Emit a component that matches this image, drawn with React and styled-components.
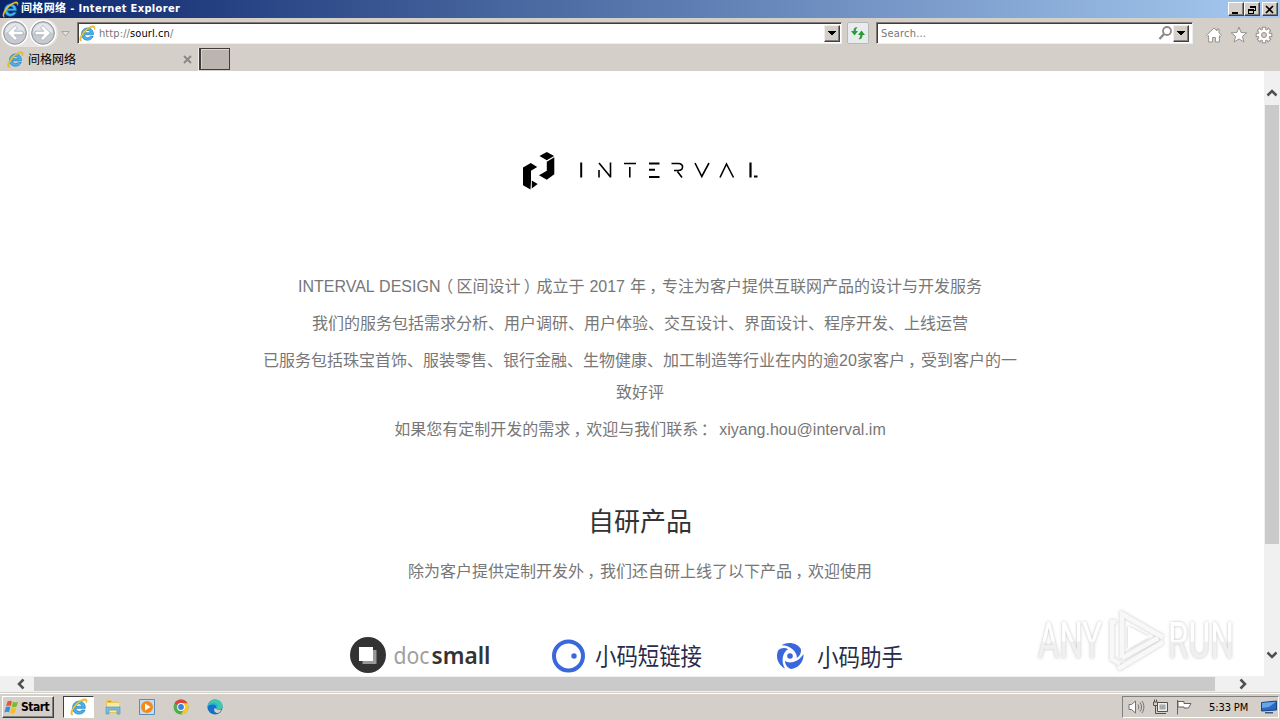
import React from "react";
import styled, { createGlobalStyle } from "styled-components";

const GlobalStyle = createGlobalStyle`
  * {
    box-sizing: border-box;
  }
  body {
    margin: 0;
    overflow: hidden;
    background: #fff;
  }
`;

const IeIcon = ({ size = 16 }) => (
  <svg width={size} height={size} viewBox="0 0 16 16">
    <path
      d="M13.6 9.2H5.2c.2 1.8 1.4 2.7 3 2.7 1.1 0 1.9-.4 2.4-1.2h2.8c-.9 2.3-2.8 3.6-5.3 3.6-3.4 0-5.8-2.3-5.8-5.7C2.3 5.2 4.7 2.8 8.1 2.8c3.5 0 5.7 2.5 5.5 6.4zM5.3 7.3h5.3C10.4 5.9 9.4 5.1 8 5.1S5.6 5.9 5.3 7.3z"
      fill="#45b4ec"
      stroke="#1a78bd"
      strokeWidth=".6"
    />
    <path
      d="M2.6 15.2C-.6 15.6.4 10.6 4.2 6.2 8 1.8 13.2-.4 14.7 1.1c.8.8.5 2.2-.2 3.6.1-1.4-.2-2.4-1.3-2.5-2-.2-5.3 1.9-8 5.1-2.9 3.5-4.2 7-2.6 7.9z"
      fill="#f4c832"
      stroke="#c48f18"
      strokeWidth=".3"
    />
  </svg>
);

const ArrowCircle = ({ flip }) => (
  <svg width="28" height="28" viewBox="0 0 28 28">
    <circle cx="14" cy="14" r="12.5" fill="#e9e9ea" stroke="#fff" strokeWidth="1.5" />
    <circle cx="14" cy="14" r="11.3" fill="#c7cbd1" stroke="#8f949b" />
    <path d="M4 14a10 10 0 0 1 20 0c-6-2-14-2-20 0z" fill="#e3e6ea" />
    <path
      d="M14 6.5 6.500 14l7.500 7.500 2.500-2.300-3.300-3.400H22v-3.600h-8.800l3.300-3.400z"
      fill="#fff"
      stroke="#a5abb4"
      strokeWidth=".8"
      transform={flip ? "translate(28 0) scale(-1 1)" : undefined}
    />
  </svg>
);

const Caret = () => (
  <svg width="8" height="5" viewBox="0 0 8 5" shapeRendering="crispEdges">
    <path d="M0 0h8L4 4.500z" fill="#000" />
  </svg>
);

const Chevron = ({ rotate = 0 }) => (
  <svg width="12" height="12" viewBox="0 0 12 12">
    <path
      d="M1.500 8.500 6 4l4.500 4.500"
      fill="none"
      stroke="#505050"
      strokeWidth="2.5"
      transform={`rotate(${rotate} 6 6)`}
    />
  </svg>
);

const HomeIcon = () => (
  <svg width="18" height="18" viewBox="0 0 18 18">
    <path
      d="M9 2 1.500 9.300l1.200 1.200.9-.8V16h4v-4.500h2.800V16h4V9.700l.9.800 1.200-1.200L14 6.900V3h-2v2z"
      fill="#fff"
      stroke="#96918c"
    />
  </svg>
);

const StarIcon = () => (
  <svg width="18" height="18" viewBox="0 0 18 18">
    <path
      d="M9 1.200l2.100 5.300 5.700.3-4.400 3.600 1.500 5.600L9 12.900 4.100 16l1.500-5.600L1.200 6.800l5.700-.3z"
      fill="#fff"
      stroke="#96918c"
    />
  </svg>
);

const GearIcon = () => (
  <svg width="18" height="18" viewBox="0 0 18 18">
    {[0, 45, 90, 135].map((a) => (
      <rect
        key={a}
        x="7.3"
        y="1.2"
        width="3.4"
        height="15.6"
        fill="#fff"
        stroke="#96918c"
        transform={`rotate(${a} 9 9)`}
      />
    ))}
    <circle cx="9" cy="9" r="5.4" fill="#fff" />
    <circle cx="9" cy="9" r="2.5" fill="#d5cfc9" stroke="#96918c" />
  </svg>
);

const IntervalLogo = () => (
  <svg width="236" height="40" viewBox="0 0 236 40">
    <g fill="#000">
      <path d="M1 16.500 8.800 12l6.400 4-6.200 3.700v10.600L8.500 38.500 1 34.200z" />
      <path d="M9.800 29.500 15.700 33l-5.900 4.500z" />
      <path d="M17.500 5 24.800 1l7.300 4-7.300 4.300z" />
      <path d="M24.800 10.800 32.300 6.300v17L24.800 28.700 17 24.200l7.800-4.500z" />
    </g>
    <g fill="none" stroke="#000" strokeWidth="1.6">
      <path d="M59.200 11.500v15" strokeWidth="2" />
      <path d="M77 19v7.500M77 12l11.500 14M88.500 11.500v15" />
      <path d="M102 12.500h12M107.800 16v10.500" />
      <path d="M127 12.500h10.500M127 18.800h6M127 26h10.500" strokeWidth="2" />
      <path d="M149.500 12.500h7c5.500 0 5.500 7-.5 7h-4M155.500 20.500l4.500 6" />
      <path d="m173 12 6.800 13.500L187 12M198 26.500 204.500 13l7 13.500" />
      <path d="M228.500 11.500v15M232 25.500h3.500" strokeWidth="2.200" />
    </g>
  </svg>
);

const DocSmallLogo = () => (
  <svg width="144" height="38" viewBox="0 0 144 38">
    <circle cx="19" cy="19" r="18" fill="#333" />
    <path d="M23 14h4.500v14h-14v-4z" fill="#999" />
    <path d="M10 11h14v14H10z" fill="#fff" />
    <g fontFamily="'Noto Sans', sans-serif" fontSize="23">
      <text x="44.5" y="27.5" fill="#a0a0a0" textLength="36" lengthAdjust="spacingAndGlyphs">
        doc
      </text>
      <text x="82.5" y="27.5" fill="#333" fontWeight="600" textLength="59" lengthAdjust="spacingAndGlyphs">
        small
      </text>
    </g>
  </svg>
);

const ShortLinkLogo = () => (
  <svg width="154" height="38" viewBox="0 0 154 38">
    <circle cx="17.5" cy="20" r="14.5" fill="none" stroke="#3a67dc" strokeWidth="4" />
    <circle cx="23" cy="20" r="2.7" fill="#3a67dc" />
    <text x="44" y="29" fontFamily="'Noto Sans CJK SC', sans-serif" fontSize="24" fill="#282c4c" textLength="107" lengthAdjust="spacingAndGlyphs">
      小码短链接
    </text>
  </svg>
);

const HelperLogo = () => (
  <svg width="130" height="38" viewBox="0 0 130 38">
    <g fill="#3a67dc" transform="translate(15 20)">
      {[0, 120, 240].map((a) => (
        <path
          key={a}
          d="M13.500-2C14 6 8 12.500 1 13-2.500 12-5 8.500-5 5-1 8 8.500 6.500 13.500-2z"
          transform={`rotate(${a})`}
        />
      ))}
      <circle r="2.8" />
    </g>
    <text x="42" y="29.5" fontFamily="'Noto Sans CJK SC', sans-serif" fontSize="24" fill="#282c4c" textLength="86" lengthAdjust="spacingAndGlyphs">
      小码助手
    </text>
  </svg>
);

const AnyRun = () => (
  <svg width="210" height="72" viewBox="0 0 210 72">
    <defs>
      <linearGradient id="fade" x1="0" y1="0" x2="0" y2="1">
        <stop offset=".5" stopColor="#fff" />
        <stop offset=".52" stopColor="#f0f0f0" />
      </linearGradient>
      <filter id="glow" x="-10%" y="-10%" width="120%" height="120%">
        <feDropShadow dx="0" dy="0" stdDeviation="1.8" floodColor="#888" floodOpacity=".55" />
      </filter>
    </defs>
    <g filter="url(#glow)" fill="url(#fade)" fontFamily="Roboto, sans-serif" fontSize="50">
      <text x="8" y="54" textLength="64" lengthAdjust="spacingAndGlyphs">
        ANY
      </text>
      <text x="138" y="54" textLength="66" lengthAdjust="spacingAndGlyphs">
        RUN
      </text>
      <g fill="none" stroke="#f8f8f8" strokeWidth="4.5">
        <path d="M86 18h-4v37l8 5" />
        <path d="M92 54V10l41 23.500" />
        <path d="M92 54l36-20M88 65l45-27" />
      </g>
      <path d="M98 22v23l21-12z" fill="#fff" />
    </g>
  </svg>
);

function TitleBar() {
  return (
    <Title>
      <IeIcon size={17} />
      <TitleText>间格网络 - Internet Explorer</TitleText>
      <WinButtons>
        <WinButton>
          <svg width="10" height="9"><path d="M1 7h6v2H1z" /></svg>
        </WinButton>
        <WinButton>
          <svg width="10" height="9" fill="none" stroke="#000" shapeRendering="crispEdges">
            <path d="M3 1h6M3.500 1v2M3 2h6M8.500 1v5M7 5.500h2M1 4h6M1 5h6M1.500 4v5M6.500 4v5M1 8.500h6" />
          </svg>
        </WinButton>
        <WinButton $gap>
          <svg width="10" height="9" stroke="#000" strokeWidth="1.7">
            <path d="m1 1 7 7M8 1 1 8" />
          </svg>
        </WinButton>
      </WinButtons>
    </Title>
  );
}

function Toolbar() {
  return (
    <Tools>
      <NavButtons>
        <ArrowCircle />
        <ArrowCircle flip />
      </NavButtons>
      <History>
        <svg width="9" height="6"><path d="M.7.500h7.600L4.500 5z" fill="#e4e1de" stroke="#aaa5a0" /></svg>
      </History>
      <Field $width={765} $end={1}>
        <IeIcon size={17} />
        <Url>
          http://<b>sourl.cn</b>/
        </Url>
        <DropButton>
          <Caret />
        </DropButton>
      </Field>
      <Refresh>
        <svg width="16" height="16" viewBox="0 0 16 16" fill="#2e9a37">
          <path d="M7.500 2.500C5.500 1.500 3.500 3 3.500 6H1l3.500 4.500L8 6H5.700c0-1.500.6-2.500 1.800-3.500z" />
          <path d="M8.500 14c2 .8 4-.5 4-4H15l-3.500-4.500L8 10h2.300c0 1.500-.6 3-1.800 4z" />
        </svg>
      </Refresh>
      <Field $width={317} $end={3}>
        <Placeholder>Search...</Placeholder>
        <svg width="16" height="16" viewBox="0 0 16 16" fill="none" stroke="#8a8a8a">
          <circle cx="10" cy="6" r="4" strokeWidth="1.8" />
          <path d="m7 9-4.500 5" strokeWidth="2.3" />
        </svg>
        <DropButton>
          <Caret />
        </DropButton>
      </Field>
      <Commands>
        <HomeIcon />
        <StarIcon />
        <GearIcon />
      </Commands>
    </Tools>
  );
}

function Tabs() {
  return (
    <TabRow>
      <Tab>
        <IeIcon size={17} />
        <span>间格网络</span>
        <svg width="9" height="9" stroke="#8a8580" strokeWidth="1.8">
          <path d="m1 1 7 7M8 1 1 8" />
        </svg>
      </Tab>
      <NewTab />
    </TabRow>
  );
}

function Page() {
  return (
    <Content>
      <IntervalLogo />
      <About>
        <p>
          INTERVAL DESIGN<Mark $shift={-0.2}>（</Mark>区间设计<Mark $shift={0.2}>）</Mark>成立于 2017 年
          <Mark $shift={0.2}>，</Mark>专注为客户提供互联网产品的设计与开发服务
        </p>
        <p>我们的服务包括需求分析、用户调研、用户体验、交互设计、界面设计、程序开发、上线运营</p>
        <p>
          已服务包括珠宝首饰、服装零售、银行金融、生物健康、加工制造等行业在内的逾20家客户
          <Mark $shift={0.2}>，</Mark>受到客户的一
          <br />
          致好评
        </p>
        <p>
          如果您有定制开发的需求<Mark $shift={0.2}>，</Mark>欢迎与我们联系<Mark $shift={0.15}>：</Mark>{" "}
          xiyang.hou@interval.im
        </p>
      </About>
      <Heading>自研产品</Heading>
      <Intro>
        除为客户提供定制开发外<Mark $shift={0.2}>，</Mark>我们还自研上线了以下产品
        <Mark $shift={0.2}>，</Mark>欢迎使用
      </Intro>
      <Products>
        <DocSmallLogo />
        <ShortLinkLogo />
        <HelperLogo />
      </Products>
    </Content>
  );
}

function Taskbar() {
  return (
    <Task>
      <Start>
        <svg width="17" height="16" viewBox="0 0 17 16">
          <path d="M3.500 2.500C5 1.500 6.500 1.500 8 2.300L6.700 7.200c-1.500-.8-3-.8-4.600.1z" fill="#e8562a" />
          <path d="M9 2.800c1.700.8 3.300.8 5-.1l-1.400 4.900c-1.600.9-3.200.9-4.900.1z" fill="#7db928" />
          <path d="M1.800 8.300c1.600-.9 3.100-.9 4.600-.1L5 13.300c-1.500-.8-3-.8-4.600.1z" fill="#3a8ee0" />
          <path d="M7.400 8.800c1.700.8 3.300.8 4.900 0l-1.400 5c-1.600.8-3.200.8-4.900 0z" fill="#f5be25" />
        </svg>
        Start
      </Start>
      <ActiveTask>
        <IeIcon size={18} />
      </ActiveTask>
      <Pinned>
        <svg width="18" height="18" viewBox="0 0 18 18">
          <path d="M2 2h5l1 1.500h7V15H2z" fill="#e9c55b" />
          <path d="M3 5h12v9H3z" fill="#fae9a3" />
          <path d="M4 3h3v1H4z" fill="#5bbd62" />
          <path d="M2 9h14v7h-3v-4H5v4H2z" fill="#76bddf" stroke="#4a91bc" strokeWidth=".6" />
        </svg>
        <svg width="18" height="18" viewBox="0 0 18 18">
          <path d="M1.500 1.500h15v15h-15z" fill="#c7dcee" stroke="#5c8cb8" />
          <circle cx="9" cy="9" r="6" fill="#f28b1c" />
          <path d="m7 5.500 5.500 3.500L7 12.500z" fill="#fff" />
        </svg>
        <svg width="18" height="18" viewBox="0 0 18 18">
          <circle cx="9" cy="9" r="7.5" fill="#4fae4b" />
          <path d="M9 9 2.500 5.250A7.500 7.500 0 0 1 15.500 5.250H9z" fill="#df4338" />
          <path d="M9 9V5.250h6.500A7.500 7.500 0 0 1 9 16.500l3.200-5.600z" fill="#f8c927" />
          <circle cx="9" cy="9" r="3.9" fill="#fff" />
          <circle cx="9" cy="9" r="2.9" fill="#3d7fe5" />
        </svg>
        <svg width="18" height="18" viewBox="0 0 18 18">
          <circle cx="9" cy="9" r="7.6" fill="#1672c5" />
          <path d="M1.400 8.500C2.200 3.500 6 1.400 9 1.400c5 0 8.500 4 7.500 7.500-.8 2.800-4.300 3-6.200 2C12 8.500 10 6 7 6 4.500 6 2.500 7 1.400 8.500z" fill="#3fc9a9" />
          <path d="M1.400 8.500C2.500 4.500 8 3.500 11 6c1.500 1.400 1.200 3-.7 4.900C11 8 9 6.500 7 6.500c-2.500 0-4.500.8-5.600 2z" fill="#2bb0e5" />
          <path d="M10.300 10.900c1.500 1.300 4.200 1.100 5.400.3-.9 2-2 3-3.600 3.800-3 .2-5-2.500-3.300-5z" fill="#d5cfc9" />
        </svg>
      </Pinned>
      <Tray>
        <svg width="17" height="16" viewBox="0 0 17 16" fill="none" stroke="#77736f">
          <path d="M1 5.500h2.500L7.500 2v12l-4-3.500H1z" fill="#fff" />
          <path d="M10 5.500c1 1.500 1 3.500 0 5M12 3.500c2 2.500 2 6.500 0 9M14 2c2.500 3.500 2.500 8.500 0 12" />
        </svg>
        <svg width="17" height="16" viewBox="0 0 17 16" fill="none" stroke="#55514e">
          <path d="M5.500 3.500h10v9h-10z" fill="#eee" />
          <path d="M7.500 5.500h6v5h-6z" fill="#aaa" stroke="none" />
          <path d="M8 14.500h6M1.500 3v3.500h4V3zM2.500 3V.500M4.500 3V.500M3.500 7v7.500H8" />
        </svg>
        <svg width="17" height="16" viewBox="0 0 17 16" fill="#fff" stroke="#66625f">
          <path d="M1.500 1v14.500" />
          <path d="M2 2.500h6v2h7L12.500 9H8V8H2z" />
        </svg>
        <Clock>5:33 PM</Clock>
        <svg width="16" height="14" viewBox="0 0 16 14">
          <path d="M.5 2.500 15.500 1v9L.5 11z" fill="#2769c4" stroke="#19437e" />
          <path d="m1 3 14-1.300L8 7 1 8z" fill="#66a5e8" />
          <path d="M4 12h8v1.500H4z" fill="#3b5984" />
        </svg>
      </Tray>
    </Task>
  );
}

function App() {
  return (
    <Screen>
      <GlobalStyle />
      <TitleBar />
      <Toolbar />
      <Tabs />
      <Viewport>
        <Page />
        <VScroll>
          <Chevron />
          <VThumb />
          <Chevron rotate={180} />
        </VScroll>
      </Viewport>
      <HScroll>
        <Chevron rotate={-90} />
        <HThumb />
        <Chevron rotate={90} />
      </HScroll>
      <Taskbar />
      <Watermark>
        <AnyRun />
      </Watermark>
    </Screen>
  );
}

const Screen = styled.div`
  position: relative;
  display: flex;
  flex-direction: column;
  width: 1280px;
  height: 720px;
  overflow: hidden;
  background: #d5cfc9;
  font: 11px "DejaVu Sans Condensed", "Noto Sans CJK SC", sans-serif;
  svg {
    display: block;
    flex: none;
  }
`;

const Title = styled.header`
  display: flex;
  align-items: center;
  height: 18px;
  padding: 0 2px;
  background: linear-gradient(90deg, #0a246a, #a6caf0);
`;

const TitleText = styled.span`
  margin-left: 2px;
  color: #fff;
  font-weight: bold;
  line-height: 18px;
  white-space: nowrap;
  letter-spacing: 0.35px;
`;

const WinButtons = styled.div`
  display: flex;
  margin-left: auto;
`;

const WinButton = styled.div`
  display: flex;
  align-items: center;
  justify-content: center;
  width: 16px;
  height: 14px;
  margin-left: ${(props) => (props.$gap ? "2px" : "0")};
  background: #d5cfc9;
  border: 1px solid;
  border-color: #fff #404040 #404040 #fff;
  box-shadow: inset -1px -1px #808080;
`;

const Tools = styled.div`
  display: flex;
  align-items: flex-start;
  height: 30px;
`;

const NavButtons = styled.div`
  display: flex;
  width: 57px;
  height: 28px;
  margin: 1px 0 0 1px;
  border-radius: 14px;
  background: #e6e3e1;
`;

const History = styled.div`
  width: 19px;
  padding: 13px 0 0 3px;
`;

const Field = styled.div`
  display: flex;
  align-items: center;
  width: ${(props) => props.$width}px;
  height: 22px;
  margin-top: 4px;
  padding: 0 ${(props) => props.$end}px 0 1px;
  background: #fff;
  border: 1px solid;
  border-color: #807b76 #eee #eee #807b76;
  box-shadow: inset 1px 1px #403c39;
`;

const Url = styled.span`
  flex: 1;
  margin-left: 3px;
  color: #777;
  letter-spacing: 0.1px;
  b {
    color: #000;
    font-weight: normal;
  }
`;

const Placeholder = styled.span`
  flex: 1;
  margin-left: 3px;
  color: #777;
  letter-spacing: 0.2px;
`;

const DropButton = styled.div`
  display: flex;
  align-items: center;
  justify-content: center;
  width: 16px;
  height: 17px;
  background: #d5cfc9;
  border: 1px solid;
  border-color: #f0eeec #404040 #404040 #f0eeec;
  box-shadow: inset -1px -1px #808080;
`;

const Refresh = styled.div`
  display: flex;
  align-items: center;
  justify-content: center;
  width: 22px;
  height: 22px;
  margin: 4px 7px 0 5px;
  background: #e9ecef;
  border: 1px solid #bab8b7;
  border-radius: 2px;
`;

const Commands = styled.div`
  display: flex;
  gap: 7px;
  margin: 8px 0 0 12px;
`;

const TabRow = styled.nav`
  display: flex;
  height: 23px;
`;

const Tab = styled.div`
  display: flex;
  align-items: center;
  width: 199px;
  padding: 0 6px 0 7px;
  border-right: 1px solid #f1efed;
  span {
    flex: 1;
    margin-left: 4px;
    font-size: 12px;
    line-height: 20px;
  }
`;

const NewTab = styled.div`
  width: 31px;
  height: 22px;
  background: #bcb4ae;
  border: solid #403c39;
  border-width: 1px 1px 1px 2px;
  box-shadow: inset 1px 1px #d9d5d2;
`;

const Viewport = styled.main`
  display: flex;
  height: 605px;
  background: #fff;
`;

const Content = styled.div`
  display: flex;
  flex-direction: column;
  align-items: center;
  width: 1264px;
  padding: 80px 0 0 16px;
  overflow: hidden;
  color: #777;
  font: 16px/32px "Liberation Sans", "Noto Sans CJK SC", sans-serif;
  text-align: center;
  white-space: nowrap;
`;

/* full-width punctuation, nudged towards the middle of its cell */
const Mark = styled.span`
  display: inline-block;
  width: 1em;
  text-align: left;
  text-indent: ${(props) => props.$shift}em;
`;

const About = styled.section`
  margin-top: 80px;
  word-spacing: 0.5px;
  p {
    margin: 0 0 5px;
  }
`;

const Heading = styled.h2`
  margin: 51px 0 0;
  color: #333;
  font-size: 26px;
  font-weight: normal;
  line-height: 40px;
`;

const Intro = styled.p`
  margin: 14px 0 0;
`;

const Products = styled.div`
  display: flex;
  align-self: flex-start;
  margin: 48px 0 0 333px;
  svg + svg {
    margin-left: 58px;
  }
  svg + svg + svg {
    margin-left: 70px;
  }
`;

const VScroll = styled.aside`
  display: flex;
  flex-direction: column;
  align-items: center;
  justify-content: space-between;
  width: 16px;
  padding: 16px 0 15px;
  background: #f0f0f0;
`;

const VThumb = styled.div`
  width: 14px;
  height: 439px;
  margin: 6px 0 auto;
  background: #cacaca;
`;

const HScroll = styled.div`
  display: flex;
  align-items: center;
  height: 16px;
  padding: 0 31px 0 15px;
  background: #f0f0f0;
`;

const HThumb = styled.div`
  width: 1181px;
  height: 14px;
  margin: 0 auto 0 7px;
  background: #cacaca;
`;

const Task = styled.footer`
  display: flex;
  align-items: center;
  height: 28px;
  padding-top: 1px;
  border-top: 1px solid #d5cfc9;
  box-shadow: inset 0 1px #fff;
`;

const Start = styled.div`
  display: flex;
  align-items: center;
  width: 52px;
  height: 22px;
  margin-left: 2px;
  padding-left: 1px;
  border: 1px solid;
  border-color: #fff #404040 #404040 #fff;
  box-shadow: inset -1px -1px #808080;
  font-weight: bold;
  font-size: 12px;
  letter-spacing: -0.5px;
`;

const ActiveTask = styled.div`
  display: flex;
  align-items: center;
  justify-content: center;
  width: 31px;
  height: 22px;
  margin-left: 9px;
  background: #fff;
  border: 1px solid;
  border-color: #404040 #fff #fff #404040;
`;

const Pinned = styled.div`
  display: flex;
  gap: 16px;
  margin-left: 10px;
`;

const Tray = styled.div`
  display: flex;
  align-items: center;
  gap: 7px;
  width: 157px;
  height: 22px;
  margin: 0 1px 0 auto;
  padding-left: 5px;
  border: 1px solid;
  border-color: #808080 #fff #fff #808080;
`;

const Clock = styled.span`
  width: 43px;
  margin: 0 2px 0 9px;
  white-space: nowrap;
  letter-spacing: -0.1px;
`;

const Watermark = styled.div`
  position: absolute;
  left: 1030px;
  top: 604px;
`;

export default App;
